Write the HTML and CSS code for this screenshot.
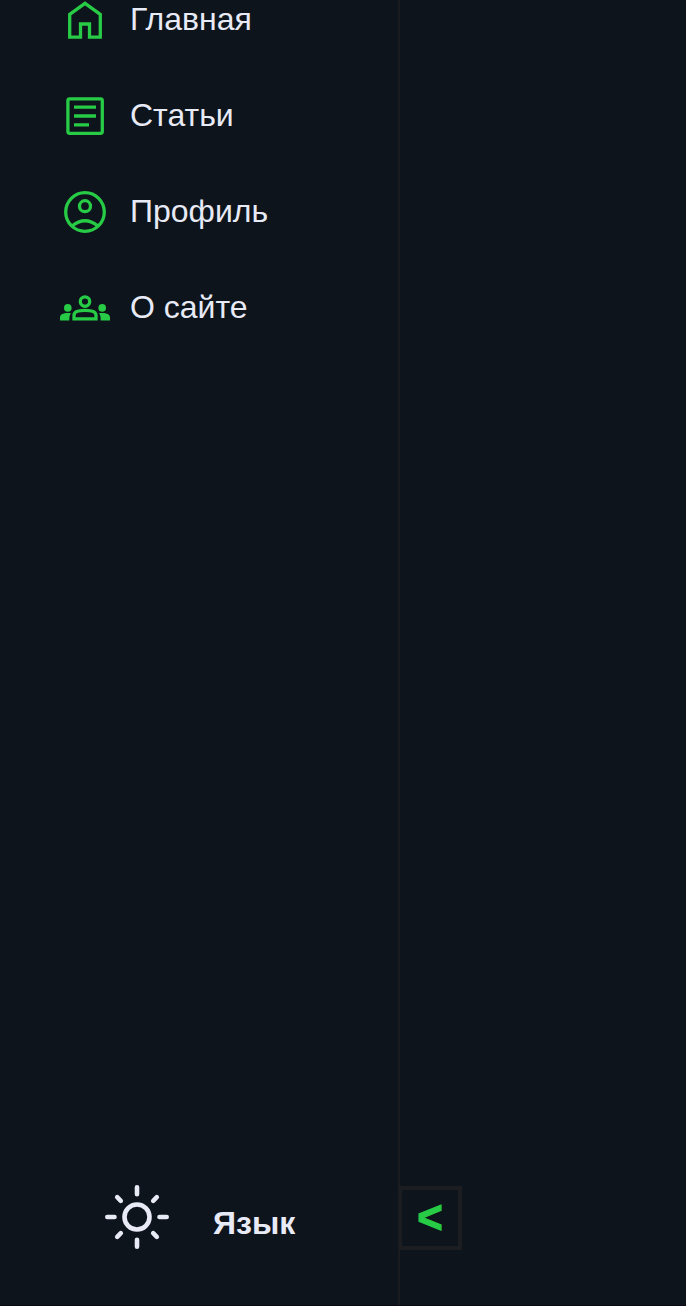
FILE: index.html
```html
<!DOCTYPE html>
<html lang="ru">
<head>
<meta charset="utf-8">
<title>Меню</title>
<link rel="stylesheet" href="styles.css">
</head>
<body>
<div class="page">
  <aside class="sidebar">
    <nav class="menu">
      <a class="item"><svg class="icon" viewBox="0 0 50 50"><path d="M9.7 42.2V19.4L25 8.4l15.3 11v22.8H29.5V29h-9v13.2z"/></svg><span>Главная</span></a>
      <a class="item"><svg class="icon" viewBox="0 0 50 50"><rect x="7.9" y="7.9" width="34.4" height="34.4" rx="1.8"/><path d="M14 16.2h22M14 25h22M14 33.8h15"/></svg><span>Статьи</span></a>
      <a class="item"><svg class="icon" viewBox="0 0 50 50"><circle cx="25" cy="25" r="19.3"/><circle cx="25" cy="19.2" r="5.5"/><path d="M12 39q13-10.5 26 0"/></svg><span>Профиль</span></a>
      <a class="item"><svg class="icon" viewBox="0 0 50 50"><circle cx="25" cy="18.6" r="4.7"/><path d="M14 32.2C14 28.6 19 27.4 25 27.4s11 1.2 11 4.8V35.9H14z"/><g class="solid"><circle cx="7.8" cy="24.9" r="3.8"/><circle cx="42.2" cy="24.9" r="3.8"/><path d="M0 37.5v-3c0-3.5 4.5-5 11-4.2-1.5 2-1.7 3.7-1.7 7.2zM50 37.5v-3c0-3.5-4.5-5-11-4.2 1.5 2 1.7 3.7 1.7 7.2z"/></g></svg><span>О сайте</span></a>
    </nav>
    <div class="controls">
      <svg class="sun" viewBox="0 0 64 64"><circle cx="32" cy="32" r="12.5"/><path d="M32 2.3v7M32 54.7v7M2.3 32h7.2M54.5 32h7.2M12.2 12.2l3.6 3.6M51.8 12.2l-3.6 3.6M12.2 51.8l3.6-3.6M51.8 51.8l-3.6-3.6"/></svg>
      <span class="lang">Язык</span>
    </div>
  </aside>
  <button class="toggle"><span class="arrow">&lt;</span></button>
</div>
</body>
</html>
```
FILE: styles.css
```css
* { box-sizing: border-box; }
body { margin: 0; background: #0d141b; color: #e8eaf6; font-family: "Liberation Sans", Arial, sans-serif; }
.page { display: flex; align-items: flex-end; height: 1306px; overflow: hidden; border-bottom: 1px solid #0c0714; }
.sidebar { display: flex; flex-direction: column; justify-content: space-between; width: 400px; height: 1305px; border-right: 2px solid #1a1b1f; }
.menu { display: flex; flex-direction: column; gap: 46px; padding-left: 60px; margin-top: -5px; }
.item { display: flex; align-items: center; gap: 20px; height: 50px; font-size: 32px; line-height: 36px; }
.item span { margin-top: -2px; }
.icon { width: 50px; height: 50px; flex: none; fill: none; stroke: #27cb45; stroke-width: 3.3; }
.solid { fill: #27cb45; stroke: none; }
.controls { display: flex; align-items: center; gap: 44px; padding: 0 0 56px 105px; }
.sun { width: 64px; height: 64px; fill: none; stroke: #e8eaf6; stroke-width: 4.6; stroke-linecap: round; }
.lang { font-size: 32px; line-height: 36px; font-weight: bold; padding-top: 12px; }
.toggle { width: 64px; height: 64px; margin: 0 0 55px -2px; padding: 0; border: 4px solid #1c1d20; background: #0d141b; color: #27cb45; font: bold 48px/56px "Liberation Sans", Arial, sans-serif; }
.arrow { display: block; transform: translateY(-1px) scale(0.91, 0.97); -webkit-text-stroke: 1.2px #27cb45; }
```
